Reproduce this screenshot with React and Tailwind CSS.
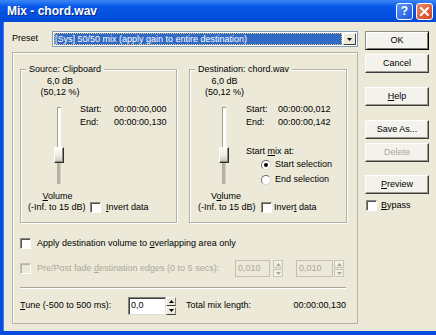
import React from "react";

const FONT = "font-['Liberation_Sans',Arial,sans-serif]";

function Check({ disabled = false }) {
  return (
    <span
      className={`block w-[11px] h-[11px] shrink-0 border border-t-[#8a887e] border-l-[#8a887e] border-r-white border-b-white shadow-[inset_1px_1px_0_#55544e] ${
        disabled ? "bg-[#ece9d8] border-t-[#c4c1b2] border-l-[#c4c1b2] shadow-[inset_1px_1px_0_#b8b5a6]" : "bg-white"
      }`}
    />
  );
}

function Radio({ checked = false }) {
  return (
    <span className="flex items-center justify-center w-[10px] h-[10px] shrink-0 rounded-full bg-white border border-t-[#6f6e68] border-l-[#6f6e68] border-r-[#d8d6cc] border-b-[#d8d6cc]">
      {checked && <span className="block w-[4px] h-[4px] rounded-full bg-black" />}
    </span>
  );
}

function Slider() {
  return (
    <div className="mt-[9px] w-[10px] h-[77px] flex flex-col items-center">
      <div className="w-[4px] h-[40px] border-l border-t border-[#a09e92] bg-white" />
      <div className="w-[10px] h-[16px] shrink-0 border border-t-white border-l-white border-r-[#303030] border-b-[#303030] bg-gradient-to-b from-[#fbfbf8] via-[#efeee8] to-[#c9c7bb] shadow-[inset_-1px_-1px_0_#8d8b80]" />
      <div className="w-[4px] flex-1 bg-[#b4b1a2] border-r border-[#d6d3c5]" />
    </div>
  );
}

function Spin({ disabled = false }) {
  const arrow = disabled ? "#aca899" : "#000";
  return (
    <div className="w-[10px] h-full flex flex-col gap-[1px]">
      {[0, 1].map((i) => (
        <div
          key={i}
          className={`flex-1 flex items-center justify-center border ${
            disabled
              ? "border-[#c9c6b6] bg-[#f1efe6]"
              : "border-t-white border-l-white border-r-[#808080] border-b-[#404040] bg-[#ece9d8]"
          }`}
        >
          <svg width="5" height="3" viewBox="0 0 5 3">
            {i === 0 ? <path d="M0 3 L2.5 0 L5 3 Z" fill={arrow} /> : <path d="M0 0 L2.5 3 L5 0 Z" fill={arrow} />}
          </svg>
        </div>
      ))}
    </div>
  );
}

function Btn({ children, def = false, disabled = false, className = "" }) {
  return (
    <div
      className={`h-[19px] w-[64px] flex items-center justify-center bg-[#f3f2ec] border ${
        def
          ? "border-t-[#8f8e86] border-l-[#8f8e86] border-r-black border-b-black shadow-[inset_1px_1px_0_white,inset_-1px_-1px_0_#7d7b72]"
          : "border-t-white border-l-white border-r-[#3c3c3c] border-b-[#3c3c3c] shadow-[inset_-1px_-1px_0_#9c9a90]"
      } ${disabled ? "text-[#aca899]" : "text-black"} ${className}`}
    >
      {children}
    </div>
  );
}

function GroupBox({ title, width, children }) {
  return (
    <div
      className={`${width} h-[154px] flex flex-col border border-[#b5b2a3] shadow-[inset_1px_1px_0_white,1px_1px_0_white]`}
    >
      <div className="-mt-[6px] ml-[5px] px-[3px] w-fit bg-[#ece9d8] leading-[11px]">{title}</div>
      {children}
    </div>
  );
}

function SourceBox() {
  return (
    <GroupBox title="Source: Clipboard" width="w-[157px]">
      <div className="mt-[1px] w-[78px] text-center leading-[11px]">6,0 dB</div>
      <div className="w-[78px] text-center leading-[11px]">(50,12 %)</div>
      <div className="h-[86px] flex items-start">
        <div className="pl-[33px]">
          <Slider />
        </div>
        <div className="ml-[16px] mt-[5px] leading-[13px]">
          <div className="flex">
            <span className="w-[34px]">Start:</span>
            <span>00:00:00,000</span>
          </div>
          <div className="flex">
            <span className="w-[34px]">End:</span>
            <span>00:00:00,130</span>
          </div>
        </div>
      </div>
      <div className="mt-[7px] ml-[7px] w-[59px] text-center leading-[11px]">
        <span className="underline">V</span>olume
      </div>
      <div className="h-[11px] flex items-center pl-[7px]">
        <span className="w-[62px] whitespace-nowrap">(-Inf. to 15 dB)</span>
        <Check />
        <span className="ml-[5px] whitespace-nowrap">
          <span className="underline">I</span>nvert data
        </span>
      </div>
    </GroupBox>
  );
}

function DestBox() {
  return (
    <GroupBox title="Destination: chord.wav" width="w-[158px]">
      <div className="mt-[1px] w-[69px] text-center leading-[11px]">6,0 dB</div>
      <div className="w-[69px] text-center leading-[11px]">(50,12 %)</div>
      <div className="h-[86px] flex items-start">
        <div className="pl-[29px]">
          <Slider />
        </div>
        <div className="ml-[17px] mt-[5px] leading-[13px]">
          <div className="flex">
            <span className="w-[32px]">Start:</span>
            <span>00:00:00,012</span>
          </div>
          <div className="flex">
            <span className="w-[32px]">End:</span>
            <span>00:00:00,142</span>
          </div>
          <div className="mt-[16px] leading-[12px]">
            Start <span className="underline">m</span>ix at:
          </div>
          <div className="h-[15px] flex items-center pl-[15px]">
            <Radio checked />
            <span className="ml-[4px] whitespace-nowrap">Start selection</span>
          </div>
          <div className="h-[15px] flex items-center pl-[15px]">
            <Radio />
            <span className="ml-[4px] whitespace-nowrap">End selection</span>
          </div>
        </div>
      </div>
      <div className="mt-[7px] ml-[8px] w-[56px] text-center leading-[11px]">
        V<span className="underline">o</span>lume
      </div>
      <div className="h-[11px] flex items-center pl-[8px]">
        <span className="w-[63px] whitespace-nowrap">(-Inf. to 15 dB)</span>
        <Check />
        <span className="ml-[2px] whitespace-nowrap">
          Inver<span className="underline">t</span> data
        </span>
      </div>
    </GroupBox>
  );
}

function TitleBar() {
  return (
    <div className="h-[22px] shrink-0 flex items-center bg-gradient-to-b from-[#3a86f7] via-[#0758e8] via-30% to-[#0248d6] pr-[3px]">
      <span className="pl-[7px] text-white font-bold text-[12px] leading-none [text-shadow:1px_1px_0_#0a2a8a]">
        Mix - chord.wav
      </span>
      <div className="ml-auto flex gap-[3px]">
        <div className="w-[17px] h-[17px] rounded-[3px] border border-white bg-gradient-to-br from-[#5b93f5] to-[#1d56d8] flex items-center justify-center text-white font-bold text-[12px] leading-none">
          ?
        </div>
        <div className="w-[17px] h-[17px] rounded-[3px] border border-white bg-gradient-to-br from-[#ec8a66] to-[#d2431c] flex items-center justify-center">
          <svg width="9" height="9" viewBox="0 0 9 9">
            <path d="M1 1 L8 8 M8 1 L1 8" stroke="white" strokeWidth="2" strokeLinecap="square" />
          </svg>
        </div>
      </div>
    </div>
  );
}

export default function App() {
  return (
    <div className={`w-[436px] h-[335px] flex flex-col overflow-hidden bg-[#0a4be0] ${FONT} text-[9px] text-black`}>
      <TitleBar />
      <div className="flex-1 ml-[3px] mb-[4px] bg-[#ece9d8] flex pl-[9px] pt-[9px] border-l border-[#3d7bf0]">
        {/* left column */}
        <div className="w-[346px] -ml-[1px] flex flex-col">
          <div className="h-[16px] flex items-center">
            <span className="w-[40px]">Preset</span>
            <div className="w-[306px] h-[16px] flex bg-white border border-[#7f9db9] p-[1px] gap-[1px]">
              <div className="flex-1 flex items-center bg-[#316ac5] text-white pl-[1px] outline outline-1 outline-dotted -outline-offset-1 outline-[#e8c46a] leading-none whitespace-nowrap overflow-hidden">
                [Sys] 50/50 mix (apply gain to entire destination)
              </div>
              <div className="w-[13px] flex items-center justify-center bg-[#ece9d8] border border-t-white border-l-white border-r-[#404040] border-b-[#404040]">
                <svg width="5" height="3" viewBox="0 0 5 3">
                  <path d="M0 0 L2.5 3 L5 0 Z" fill="#000" />
                </svg>
              </div>
            </div>
          </div>

          <div className="mt-[5px] h-[272px] border border-[#b5b2a3] shadow-[inset_1px_1px_0_white] flex flex-col pl-[7px]">
            <div className="mt-[16px] flex gap-[12px]">
              <SourceBox />
              <DestBox />
            </div>

            <div className="mt-[15px] h-[11px] flex items-center">
              <Check />
              <span className="ml-[6px] whitespace-nowrap">
                Apply destination volume to <span className="underline">o</span>verlapping area only
              </span>
            </div>

            <div className="mt-[11px] h-[17px] flex items-center text-[#aca899]">
              <Check disabled />
              <span className="ml-[6px] w-[198px] whitespace-nowrap">
                Pre/Post fade <span className="underline">d</span>estination edges (0 to 5 secs):
              </span>
              <div className="w-[35px] h-[17px] flex items-center pl-[2px] border border-[#c4c1b2] bg-[#ece9d8]">0,010</div>
              <div className="ml-[3px] h-[17px]">
                <Spin disabled />
              </div>
              <div className="ml-[13px] w-[37px] h-[17px] flex items-center pl-[2px] border border-[#c4c1b2] bg-[#ece9d8]">0,010</div>
              <div className="ml-[1px] h-[17px]">
                <Spin disabled />
              </div>
            </div>

            <div className="mt-[10px] w-[326px] h-[2px] border-t border-[#aca899] border-b border-b-white" />

            <div className="mt-[8px] h-[18px] w-[326px] flex items-center">
              <span className="w-[108px] whitespace-nowrap">
                <span className="underline">T</span>une (-500 to 500 ms):
              </span>
              <div className="w-[38px] h-[18px] flex items-center pl-[2px] bg-white border border-t-[#808080] border-l-[#808080] border-r-[#e0ded4] border-b-[#e0ded4] shadow-[inset_1px_1px_0_#404040]">
                0,0
              </div>
              <div className="h-[18px]">
                <Spin />
              </div>
              <span className="ml-[10px] whitespace-nowrap">Total mix length:</span>
              <span className="ml-auto">00:00:00,130</span>
            </div>
          </div>
        </div>

        {/* right column */}
        <div className="ml-[7px] w-[64px] flex flex-col">
          <Btn def>OK</Btn>
          <Btn className="mt-[4px]">Cancel</Btn>
          <Btn className="mt-[14px]">
            <span className="underline">H</span>elp
          </Btn>
          <Btn className="mt-[14px]">Save As...</Btn>
          <Btn className="mt-[4px]" disabled>
            Delete
          </Btn>
          <Btn className="mt-[13px]">
            <span className="underline">P</span>review
          </Btn>
          <div className="mt-[6px] h-[11px] flex items-center pl-[1px]">
            <Check />
            <span className="ml-[4px]">
              <span className="underline">B</span>ypass
            </span>
          </div>
        </div>
      </div>
    </div>
  );
}
